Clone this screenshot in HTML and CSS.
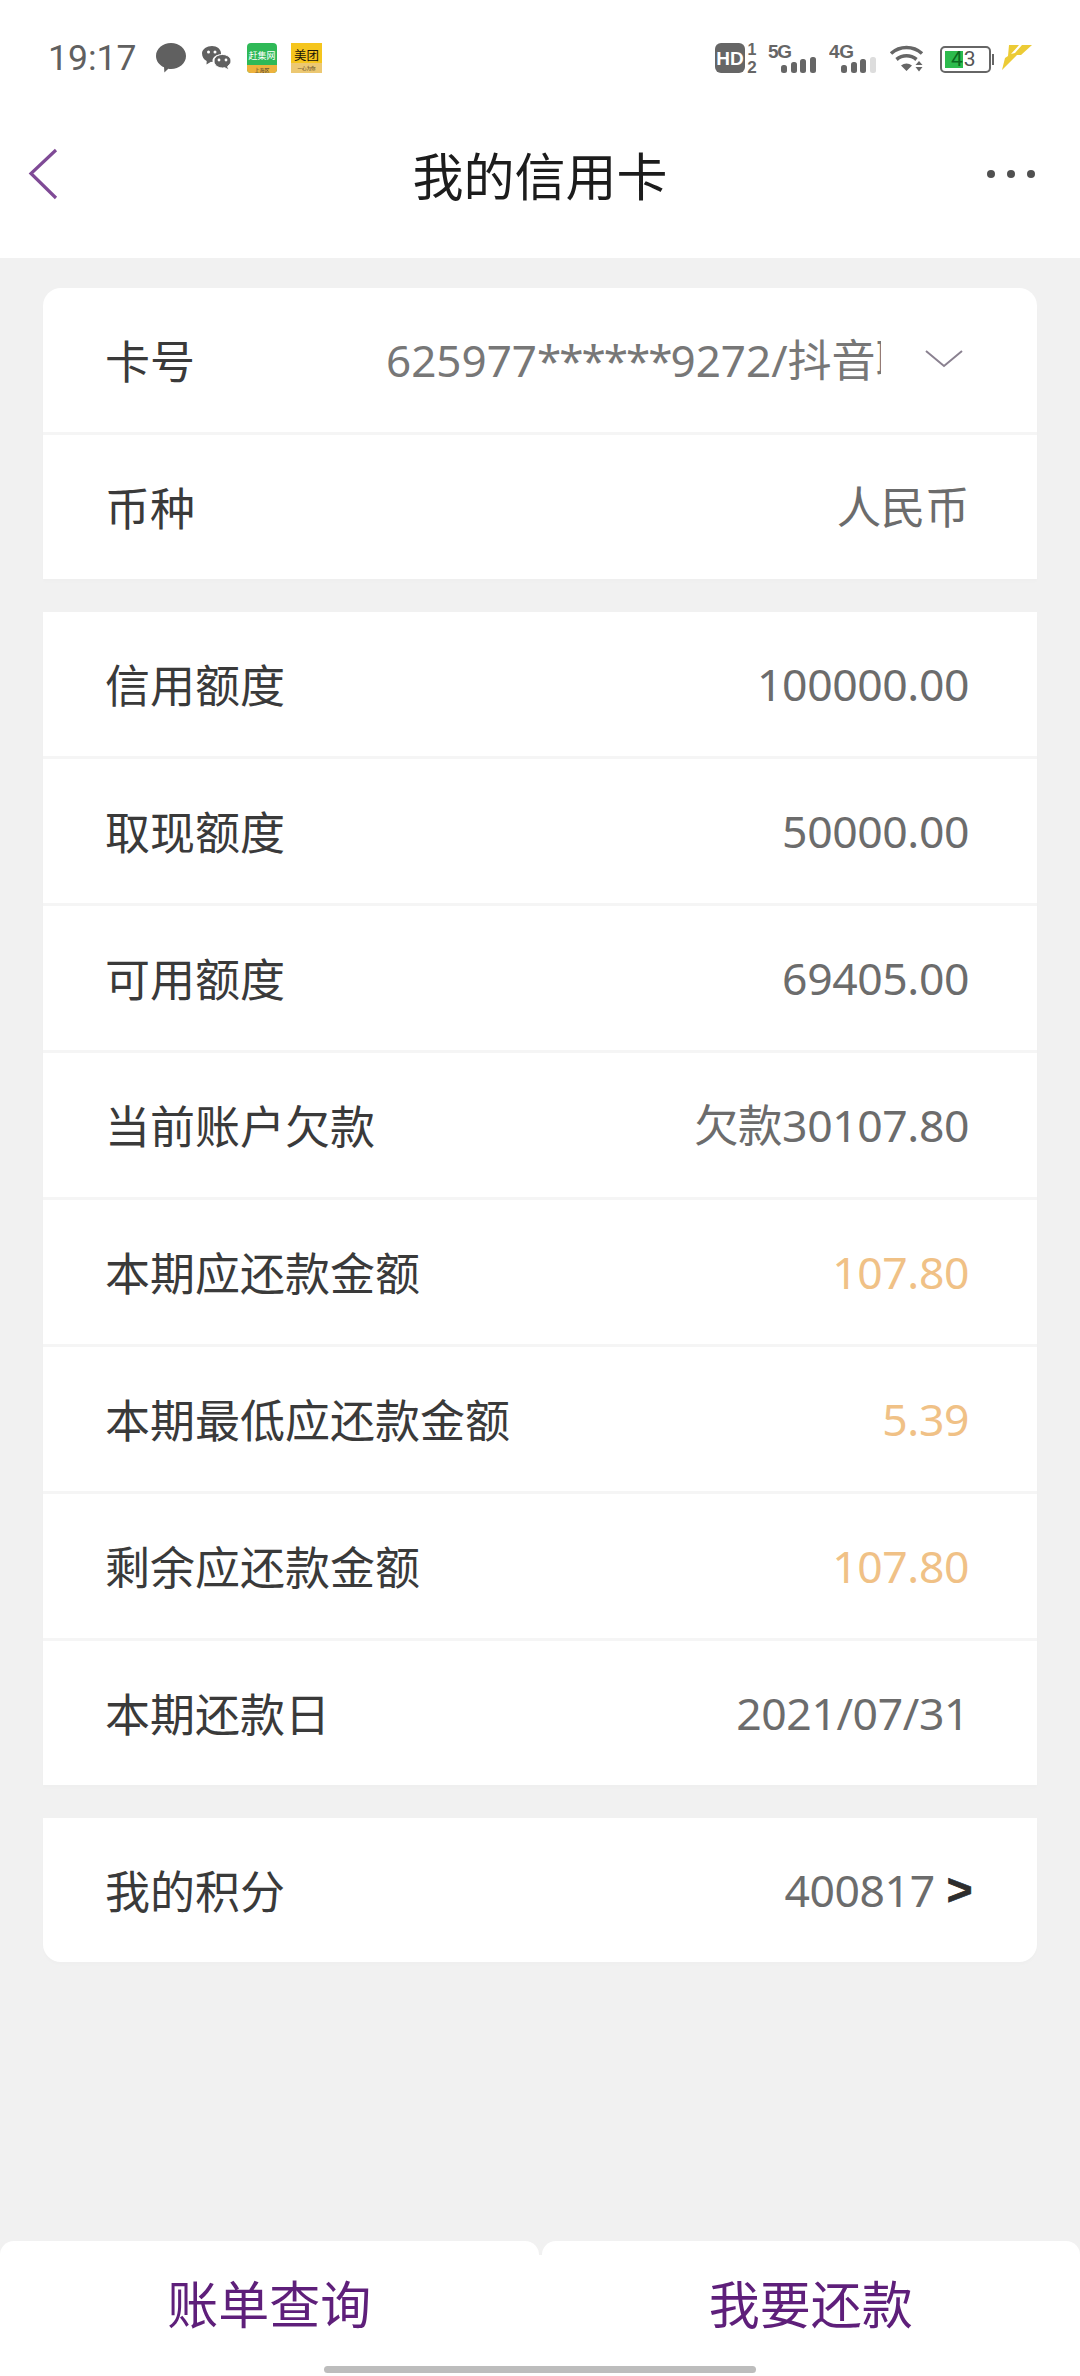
FILE: index.html
```html
<!DOCTYPE html>
<html lang="zh-CN">
<head>
<meta charset="utf-8">
<title>我的信用卡</title>
<link rel="stylesheet" href="styles.css">
</head>
<body>
<div class="app">
  <div class="top">
    <div class="status">
      <div class="status-left">
        <span class="time">19:17</span>
        <svg class="i-bubble" width="30" height="30" viewBox="0 0 30 30"><path fill="#606060" d="M15 0C23.3 0 30 5.8 30 13S23.3 26 15 26c-.9 0-1.8-.1-2.7-.2L8.4 29.500 8 24.300C3.200 22.100 0 17.900 0 13 0 5.800 6.700 0 15 0z"/></svg>
        <svg class="i-wechat" width="29" height="25" viewBox="0 0 29 25"><path fill="#606060" d="M10 0c5 0 9 3.200 9 7.300 0 .5 0 .8-.2 1.200-4.800-.3-8.300 2.800-8.300 6.500 0 .4 0 .7.100 1-.6 0-1.100-.1-1.600-.2L4.500 18.500l.2-3.400C1.900 13.700 0 10.700 0 7.300 0 3.200 5 0 10 0z"/><path fill="#606060" d="M20.500 8.500c4.700 0 8.500 2.900 8.500 6.500 0 2.200-1.400 4.100-3.300 5.300l.8 3.700-3.700-2.300c-.7.200-1.500.3-2.300.3-4.700 0-8.500-3-8.500-7s3.800-6.500 8.500-6.500z" stroke="#fff" stroke-width="1"/><circle cx="6.500" cy="6" r="1.500" fill="#fff"/><circle cx="13" cy="6" r="1.500" fill="#fff"/><circle cx="17" cy="14" r="1.400" fill="#fff"/><circle cx="24" cy="14" r="1.400" fill="#fff"/></svg>
        <svg class="i-tile" width="30" height="30" viewBox="0 0 30 30"><rect width="30" height="30" rx="4" fill="#2fb957"/><path d="M0 22h30v4a4 4 0 0 1-4 4H4a4 4 0 0 1-4-4z" fill="#eeb23c"/><text x="15" y="16" font-size="9" fill="#fff" text-anchor="middle" class="tile-text">赶集网</text><text x="15" y="29" font-size="5" fill="#333" text-anchor="middle" class="tile-text">上海区</text></svg>
        <svg class="i-tile2" width="31" height="30" viewBox="0 0 31 30"><rect width="31" height="30" fill="#f5c51d"/><rect y="20" width="31" height="10" fill="#ecc872"/><text x="15.500" y="17" font-size="12.500" fill="#1a1408" text-anchor="middle" class="tile-text">美团</text><text x="15.500" y="27" font-size="4.500" fill="#3a2a10" text-anchor="middle" class="tile-text">一心为你</text></svg>
      </div>
      <div class="status-right">
        <svg class="i-hd" width="43" height="30" viewBox="0 0 43 30"><rect width="30" height="30" rx="6" fill="#666"/><text x="15" y="22" font-size="19" font-weight="700" fill="#fff" text-anchor="middle" class="sb-text">HD</text><text x="37" y="12" font-size="16" font-weight="700" fill="#666" text-anchor="middle" class="sb-text">1</text><text x="37" y="30" font-size="17" font-weight="700" fill="#666" text-anchor="middle" class="sb-text">2</text></svg>
        <svg class="i-sig" width="48" height="30" viewBox="0 0 48 30"><text x="0" y="15" font-size="19" font-weight="700" fill="#666" class="sb-text" textLength="24">5G</text><g fill="#666"><rect x="13" y="22" width="6" height="8" rx="2.500"/><rect x="23" y="19" width="6" height="11" rx="2.500"/><rect x="32" y="16" width="6" height="14" rx="2.500"/><rect x="42" y="14" width="6" height="16" rx="2.500"/></g></svg>
        <svg class="i-sig2" width="47" height="30" viewBox="0 0 47 30"><text x="0" y="15" font-size="19" font-weight="700" fill="#666" class="sb-text" textLength="25">4G</text><g fill="#666"><rect x="12" y="22" width="6" height="8" rx="2.500"/><rect x="22" y="19" width="6" height="11" rx="2.500"/><rect x="31" y="16" width="6" height="14" rx="2.500"/><rect x="41" y="14" width="6" height="16" fill="#ddd" rx="2.500"/></g></svg>
        <svg class="i-wifi" width="37" height="28" viewBox="0 0 37 28"><g fill="none" stroke="#666" stroke-width="3.600"><path d="M2 9.500C11 1.500 24 1.500 33 9.500"/><path d="M7.500 15.500C13.500 10.500 21.500 10.500 27.500 15.500"/></g><path fill="#666" d="M12 21.500c3.500-2.700 7.500-2.700 11 0l-5.500 5.500z M30 17l3.500 4h-7z M26.500 23h7L30 27.500z"/></svg>
        <div class="battery"><div class="battery-body"><div class="battery-fill"></div><span class="battery-num"><span class="battery-four">4</span>3</span></div><div class="battery-tip"></div></div>
        <svg class="i-bolt" width="30" height="25" viewBox="0 0 30 25"><path fill="#eccb35" d="M7 0H17L9 9 13 8 20 0H30L19 10H15L0 25 3 13 6 11Z"/></svg>
      </div>
    </div>
    <div class="nav">
      <div class="nav-side">
        <svg class="back" width="30" height="52" viewBox="0 0 30 52"><path d="M28 2 3 25.500 28 50" fill="none" stroke="#7f4a96" stroke-width="3.200"/></svg>
      </div>
      <h1 class="title">我的信用卡</h1>
      <div class="nav-side nav-side-end"><div class="dots"><i></i><i></i><i></i></div></div>
    </div>
  </div>

  <main class="content">
    <section class="card round-top">
      <div class="row">
        <span class="label">卡号</span>
        <span class="card-select">
          <span class="card-number">625977<span class="mask">******</span>9272/抖音联名卡</span>
          <svg class="chev" width="38" height="18" viewBox="0 0 38 18"><path d="M1 1 19 16 37 1" fill="none" stroke="#8a8190" stroke-width="2"/></svg>
        </span>
      </div>
      <div class="row"><span class="label">币种</span><span class="value">人民币</span></div>
    </section>

    <section class="card">
      <div class="row"><span class="label">信用额度</span><span class="value">100000.00</span></div>
      <div class="row"><span class="label">取现额度</span><span class="value">50000.00</span></div>
      <div class="row"><span class="label">可用额度</span><span class="value">69405.00</span></div>
      <div class="row"><span class="label">当前账户欠款</span><span class="value">欠款30107.80</span></div>
      <div class="row"><span class="label">本期应还款金额</span><span class="value accent">107.80</span></div>
      <div class="row"><span class="label">本期最低应还款金额</span><span class="value accent">5.39</span></div>
      <div class="row"><span class="label">剩余应还款金额</span><span class="value accent">107.80</span></div>
      <div class="row"><span class="label">本期还款日</span><span class="value">2021/07/31</span></div>
    </section>

    <section class="card round-bottom">
      <div class="row"><span class="label">我的积分</span><span class="value">400817<b class="more">&gt;</b></span></div>
    </section>
  </main>

  <footer class="actions">
    <button class="action">账单查询</button>
    <button class="action">我要还款</button>
    <div class="home-bar"></div>
  </footer>
</div>
</body>
</html>
```

FILE: styles.css
```css
* { box-sizing: border-box; }
html, body { margin: 0; padding: 0; }
body {
  width: 1080px;
  height: 2376px;
  background: #f1f1f1;
  font-family: "Noto Sans CJK SC", "Noto Sans", sans-serif;
  overflow: hidden;
}
.app { display: flex; flex-direction: column; height: 2376px; }

.top { background: #fff; height: 258px; flex: none; }
.status {
  height: 100px;
  padding: 43px 48px 0 48px;
  display: flex;
  justify-content: space-between;
  align-items: flex-start;
}
.status-left, .status-right { display: flex; align-items: flex-start; }
.time {
  font-family: "Roboto", sans-serif;
  font-size: 35.5px;
  line-height: 30px;
  color: #606060;
  width: 108px;
}
.i-wechat { margin: 3px 16px 0 16px; }
.i-tile { margin-right: 14px; }
.tile-text { font-family: "Noto Sans CJK SC", sans-serif; }
.sb-text { font-family: "Liberation Sans", sans-serif; }
.i-hd { margin-right: 10px; }
.i-sig { margin-right: 13px; }
.i-sig2 { margin-right: 13px; }
.i-wifi { margin: 1px 14px 0 0; }
.battery { display: flex; align-items: center; margin: 3px 8px 0 0; }
.battery-body {
  width: 51px;
  height: 27px;
  border: 2.500px solid #666;
  border-radius: 5px;
  padding: 3px;
  position: relative;
  display: flex;
}
.battery-fill { width: 18px; background: #2dbb4d; }
.battery-num {
  position: absolute;
  left: 9px;
  top: 0;
  font-family: "Roboto", sans-serif;
  font-size: 21px;
  line-height: 22px;
  letter-spacing: 1px;
  color: #555;
}
.battery-four { color: #0b6a1f; }
.battery-tip { width: 2px; height: 11px; background: #666; margin-left: 1px; }
.i-bolt { margin-top: 2px; }

.nav {
  height: 158px;
  margin-top: -5px;
  padding: 0 28px;
  display: flex;
  align-items: center;
  justify-content: space-between;
}
.nav-side { flex: 1; display: flex; align-items: center; }
.nav-side-end { justify-content: flex-end; }
.back { flex: none; }
.title {
  margin: 0;
  font-size: 51px;
  font-weight: 400;
  line-height: 60px;
  color: #1c1c1c;
}
.dots { display: flex; gap: 12px; margin-right: 17px; }
.dots i { width: 8px; height: 8px; border-radius: 50%; background: #505050; display: block; }

.content {
  flex: 1;
  padding: 30px 43px 0 43px;
  display: flex;
  flex-direction: column;
  gap: 33px;
}
.card { background: #fff; display: flex; flex-direction: column; gap: 3px; box-shadow: 0 3px 3px rgba(0,0,0,.012); }
.card .row + .row { box-shadow: 0 -3px 0 #f5f5f5; }
.round-top { border-radius: 18px 18px 0 0; }
.round-bottom { border-radius: 0 0 18px 18px; }

.row {
  height: 144px;
  padding: 0 68px 0 62px;
  display: flex;
  align-items: center;
  justify-content: space-between;
}
.label { font-size: 45px; line-height: 60px; color: #3a3a3a; }
.value {
  font-size: 44.5px;
  line-height: 60px;
  color: #6c6c6c;
  letter-spacing: -.4px;
  font-family: "Noto Sans", "Noto Sans CJK SC", sans-serif;
  display: flex;
  align-items: center;
}
.accent { color: #f0c186; }
.more {
  font-family: "Liberation Sans", sans-serif;
  font-size: 44px;
  font-weight: 700;
  line-height: 60px;
  color: #2d2d2d;
  margin-left: 12px;
  margin-right: -3px;
  -webkit-text-stroke: .8px #2d2d2d;
}

.card-select { display: flex; align-items: center; }
.card-number {
  width: 495px;
  white-space: nowrap;
  overflow: hidden;
  font-size: 44px;
  line-height: 60px;
  color: #777;
  font-family: "Noto Sans", "Noto Sans CJK SC", sans-serif;
  margin-right: 44px;
}
.mask { letter-spacing: -2px; }
.chev { flex: none; margin-right: 6px; margin-top: -2px; }

.actions {
  height: 135px;
  flex: none;
  display: flex;
  gap: 3px;
  position: relative;
  background: linear-gradient(transparent 14px, #fff 14px);
}
.action {
  flex: 1;
  border: 0;
  background: #fff;
  border-radius: 14px 14px 0 0;
  font-family: "Noto Sans CJK SC", sans-serif;
  font-size: 51px;
  line-height: 60px;
  color: #5e1f7a;
  padding: 0 0 14px 0;
}
.home-bar {
  position: absolute;
  left: 324px;
  top: 125px;
  width: 432px;
  height: 7px;
  border-radius: 4px;
  background: #bdbdbd;
}
```
